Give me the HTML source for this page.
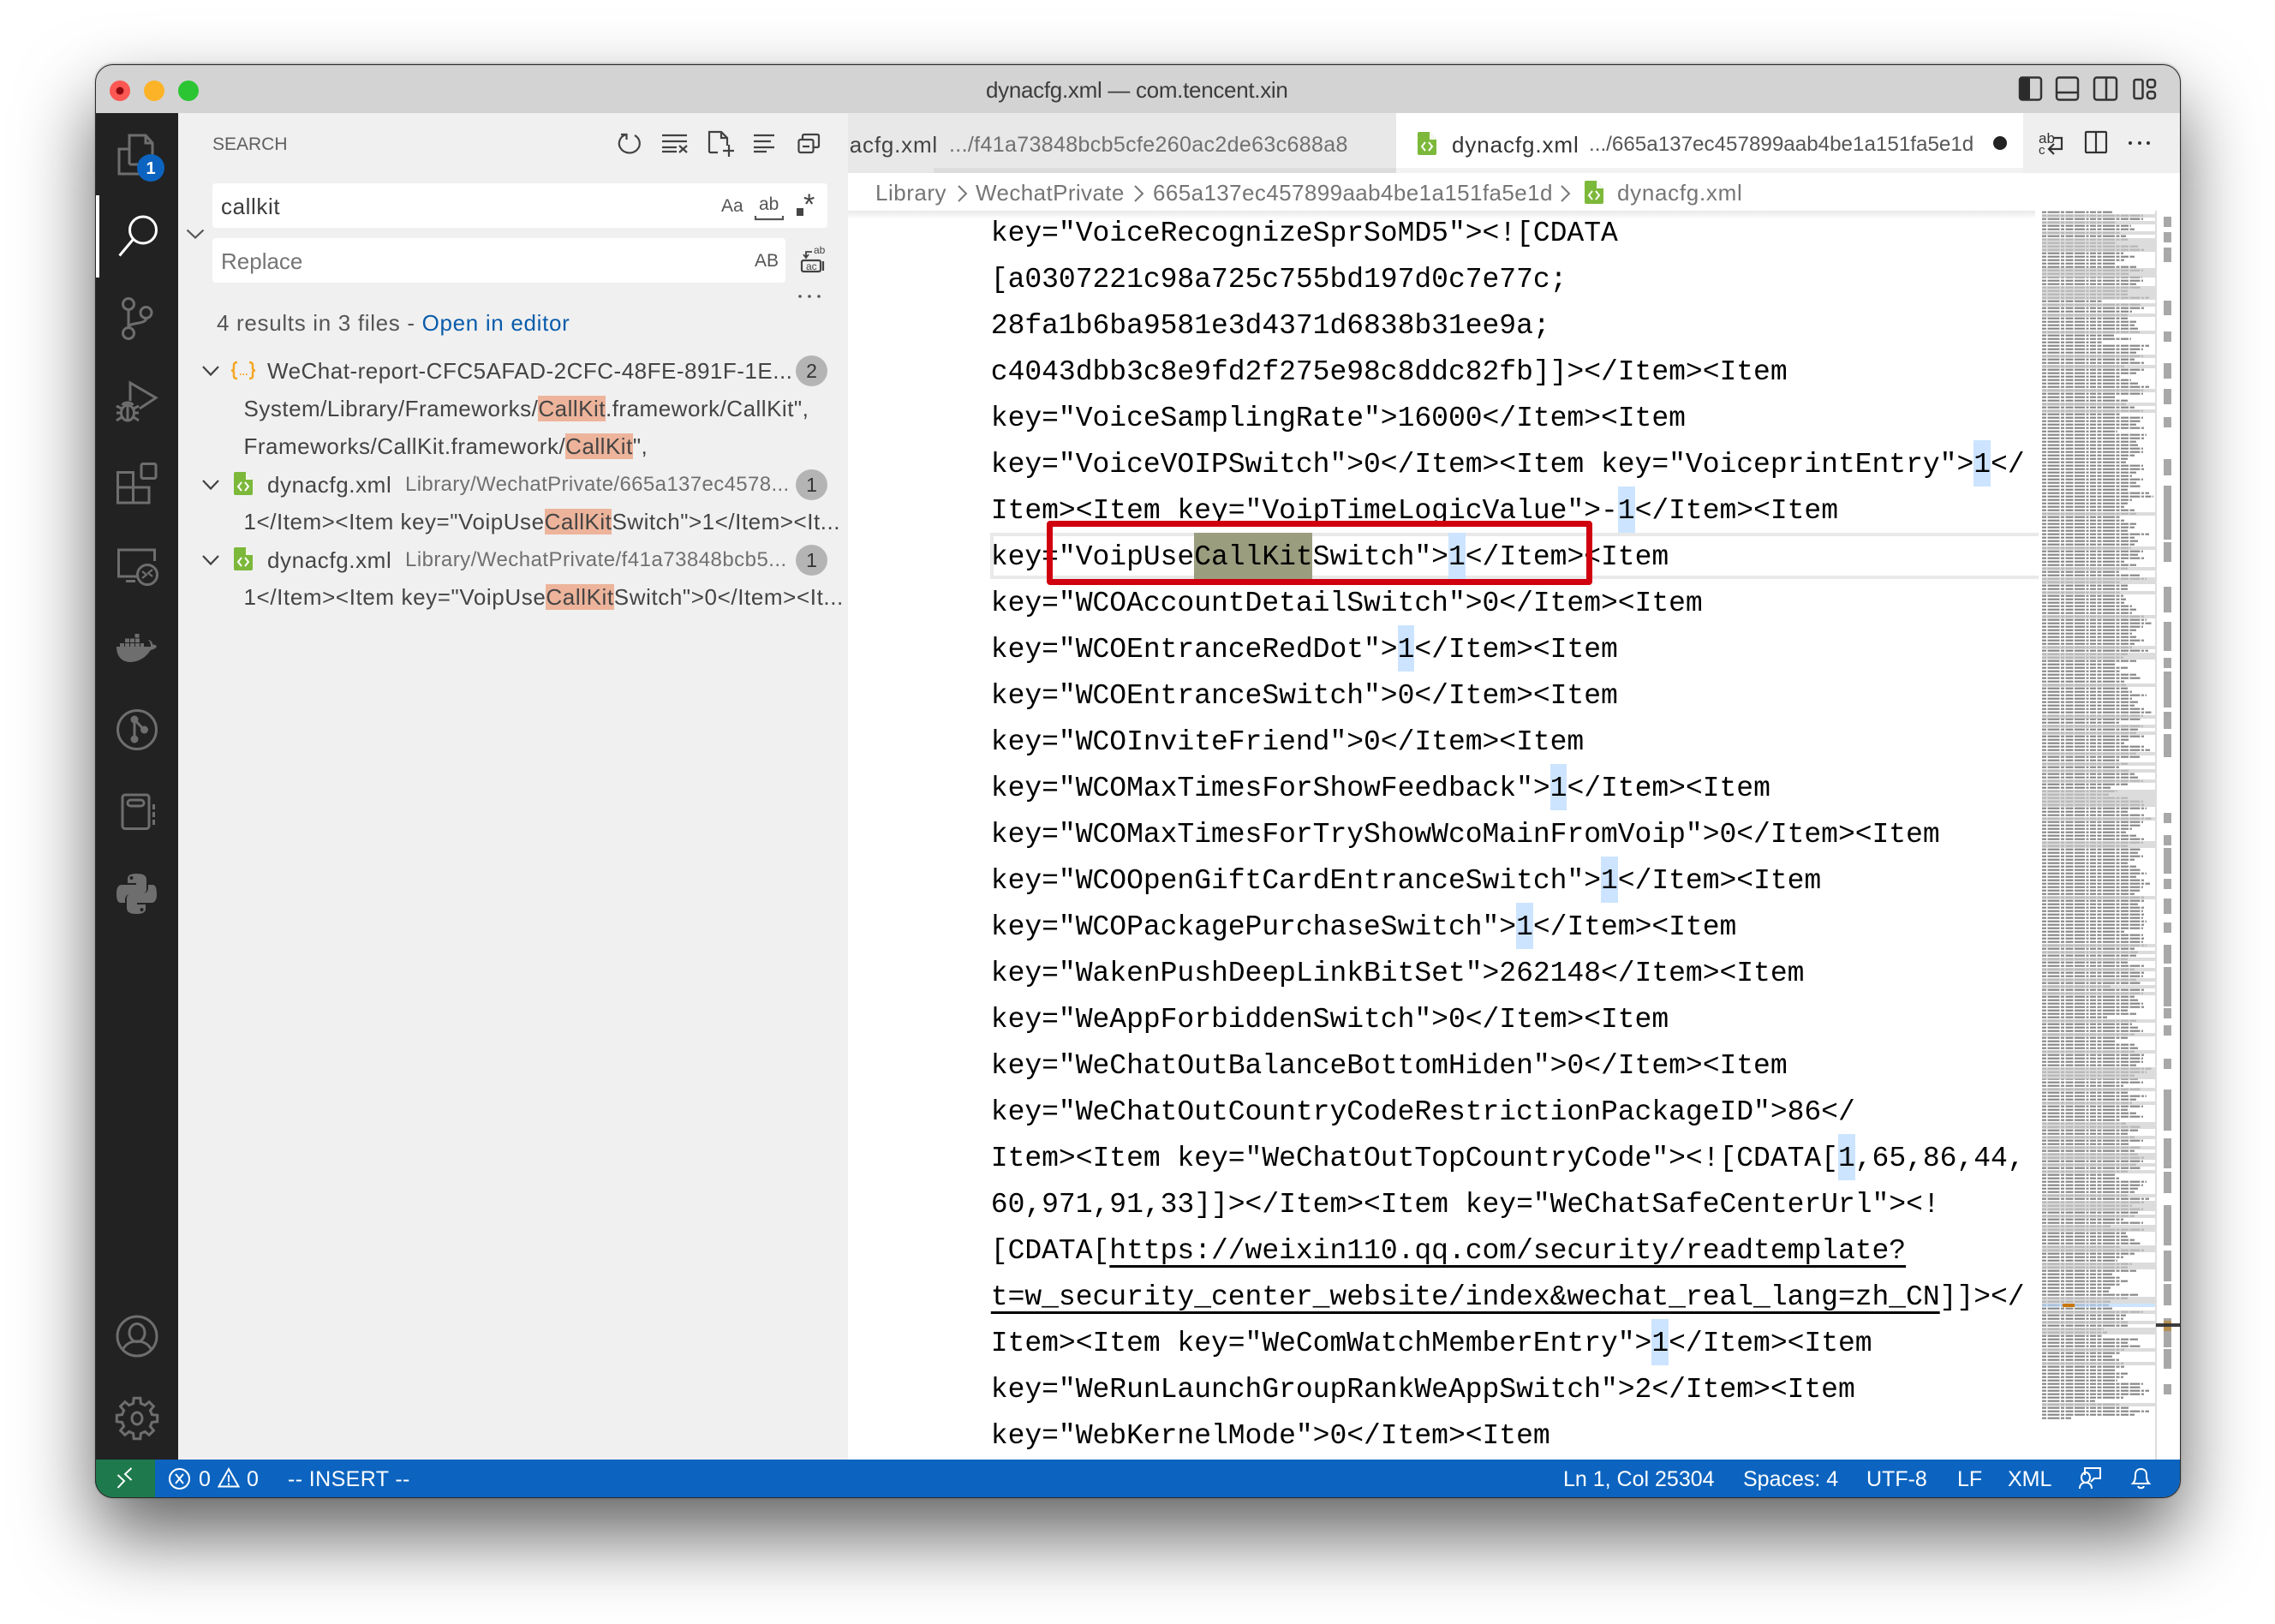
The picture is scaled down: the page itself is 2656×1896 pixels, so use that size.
<!DOCTYPE html>
<html><head><meta charset="utf-8"><style>
html,body{margin:0;padding:0;background:#fff;width:2656px;height:1896px;overflow:hidden}
*{box-sizing:border-box}
#sh{position:absolute;left:112px;top:75px;width:2433px;height:1673px;border-radius:20px;box-shadow:0 44px 90px rgba(0,0,0,.62),0 0 3px rgba(0,0,0,.5)}
#win{position:absolute;left:0;top:0;width:2656px;height:1896px;overflow:hidden;clip-path:inset(75px 111px 148px 111px round 20px);font-family:"Liberation Sans",sans-serif;color:#444}
.b{position:absolute}
.t{position:absolute;white-space:pre;line-height:44px;height:44px;font-size:26px}
.r{letter-spacing:.5px}
.m{position:absolute;left:1156.8px;top:244px;font:33px/57px "Liberation Mono",monospace;color:#000;letter-spacing:-.02px}
.m div{height:54px;white-space:pre}
.h{display:inline-block;background:#cce4ff;height:54px}
u{text-decoration:underline;text-decoration-thickness:3px;text-underline-offset:8px}
mark{background:#edb49b;color:inherit}
.dsc{font-size:24px;color:#707070;letter-spacing:.37px}
.st{color:#fff;font-size:25px}
.c{position:absolute;border-radius:50%;background:#b4b4b4;width:37px;height:36px;left:929px;text-align:center;line-height:36px;font-size:23px;color:#333}
svg{position:absolute;left:0;top:0}
</style></head><body>
<div id="sh"></div>
<div id="win">
<div class="b" style="left:100px;top:70px;width:2460px;height:62px;background:#d3d3d3"></div>
<div class="t" style="left:1151px;top:83px;color:#3c3c3c;letter-spacing:-.3px">dynacfg.xml — com.tencent.xin</div>

<!-- editor -->
<div class="b" style="left:990px;top:132px;width:1560px;height:1572px;background:#fff"></div>
<!-- tabs -->
<div class="b" style="left:990px;top:132px;width:640px;height:70px;background:#e8e8e8"></div>
<div class="b" style="left:1090px;top:196px;width:540px;height:6px;background:#dcdcdc"></div>
<div class="b" style="left:2362px;top:132px;width:190px;height:70px;background:#efefef"></div>
<div class="b" style="left:1630px;top:196px;width:732px;height:6px;background:#f2f2f2"></div>
<div class="t" style="right:1561px;top:147px;letter-spacing:.8px">dynacfg.xml</div>
<div class="t" style="left:1108px;top:147px;font-size:25px;color:#707070;letter-spacing:.35px">.../f41a73848bcb5cfe260ac2de63c688a8</div>
<div class="t" style="left:1695px;top:147px;color:#333;letter-spacing:.9px">dynacfg.xml</div>
<div class="t" style="left:1855px;top:147px;font-size:24.2px;color:#555">.../665a137ec457899aab4be1a151fa5e1d</div>
<!-- breadcrumbs -->
<div class="t" style="left:1022px;top:203px;color:#757575;letter-spacing:.5px">Library</div>
<div class="t" style="left:1139px;top:203px;color:#757575;letter-spacing:.4px">WechatPrivate</div>
<div class="t" style="left:1346px;top:203px;color:#757575;letter-spacing:.4px">665a137ec457899aab4be1a151fa5e1d</div>
<div class="t" style="left:1888px;top:203px;color:#757575;letter-spacing:.7px">dynacfg.xml</div>
<div class="b" style="left:990px;top:246px;width:1386px;height:10px;background:linear-gradient(rgba(0,0,0,.09),rgba(0,0,0,0))"></div>

<!-- code -->
<div class="b" style="left:1156px;top:622px;width:1228px;height:54px;border:4px solid #e9e9e9;border-right:0"></div>
<div class="b" style="left:1394px;top:622px;width:138px;height:54px;background:#9b9d7f"></div>
<div class="m">
<div>key="VoiceRecognizeSprSoMD5"&gt;&lt;![CDATA</div>
<div>[a0307221c98a725c755bd197d0c7e77c;</div>
<div>28fa1b6ba9581e3d4371d6838b31ee9a;</div>
<div>c4043dbb3c8e9fd2f275e98c8ddc82fb]]&gt;&lt;/Item&gt;&lt;Item</div>
<div>key="VoiceSamplingRate"&gt;16000&lt;/Item&gt;&lt;Item</div>
<div>key="VoiceVOIPSwitch"&gt;0&lt;/Item&gt;&lt;Item key="VoiceprintEntry"&gt;<span class="h">1</span>&lt;/</div>
<div>Item&gt;&lt;Item key="VoipTimeLogicValue"&gt;-<span class="h">1</span>&lt;/Item&gt;&lt;Item</div>
<div>key="VoipUseCallKitSwitch"&gt;<span class="h">1</span>&lt;/Item&gt;&lt;Item</div>
<div>key="WCOAccountDetailSwitch"&gt;0&lt;/Item&gt;&lt;Item</div>
<div>key="WCOEntranceRedDot"&gt;<span class="h">1</span>&lt;/Item&gt;&lt;Item</div>
<div>key="WCOEntranceSwitch"&gt;0&lt;/Item&gt;&lt;Item</div>
<div>key="WCOInviteFriend"&gt;0&lt;/Item&gt;&lt;Item</div>
<div>key="WCOMaxTimesForShowFeedback"&gt;<span class="h">1</span>&lt;/Item&gt;&lt;Item</div>
<div>key="WCOMaxTimesForTryShowWcoMainFromVoip"&gt;0&lt;/Item&gt;&lt;Item</div>
<div>key="WCOOpenGiftCardEntranceSwitch"&gt;<span class="h">1</span>&lt;/Item&gt;&lt;Item</div>
<div>key="WCOPackagePurchaseSwitch"&gt;<span class="h">1</span>&lt;/Item&gt;&lt;Item</div>
<div>key="WakenPushDeepLinkBitSet"&gt;262148&lt;/Item&gt;&lt;Item</div>
<div>key="WeAppForbiddenSwitch"&gt;0&lt;/Item&gt;&lt;Item</div>
<div>key="WeChatOutBalanceBottomHiden"&gt;0&lt;/Item&gt;&lt;Item</div>
<div>key="WeChatOutCountryCodeRestrictionPackageID"&gt;86&lt;/</div>
<div>Item&gt;&lt;Item key="WeChatOutTopCountryCode"&gt;&lt;![CDATA[<span class="h">1</span>,65,86,44,</div>
<div>60,971,91,33]]&gt;&lt;/Item&gt;&lt;Item key="WeChatSafeCenterUrl"&gt;&lt;!</div>
<div>[CDATA[<u>https://weixin110.qq.com/security/readtemplate?</u></div>
<div><u>t=w_security_center_website/index&amp;wechat_real_lang=zh_CN</u>]]&gt;&lt;/</div>
<div>Item&gt;&lt;Item key="WeComWatchMemberEntry"&gt;<span class="h">1</span>&lt;/Item&gt;&lt;Item</div>
<div>key="WeRunLaunchGroupRankWeAppSwitch"&gt;2&lt;/Item&gt;&lt;Item</div>
<div>key="WebKernelMode"&gt;0&lt;/Item&gt;&lt;Item</div>
</div>
<div class="b" style="left:2380px;top:246px;width:170px;height:1458px;background:#fff"></div>
<div class="b" style="left:2516px;top:246px;width:1.5px;height:1458px;background:#ddd"></div>

<!-- activity + sidebar -->
<div class="b" style="left:100px;top:132px;width:108px;height:1572px;background:#222"></div>
<div class="b" style="left:112px;top:228px;width:4px;height:96px;background:#fff"></div>
<div class="b" style="left:208px;top:132px;width:782px;height:1572px;background:#f0f0f0"></div>
<div class="t" style="left:248px;top:146.5px;font-size:21px;color:#5f5f5f">SEARCH</div>
<div class="b" style="left:248px;top:214px;width:718px;height:52px;background:#fff;border-radius:4px"></div>
<div class="b" style="left:248px;top:278px;width:669px;height:52px;background:#fff;border-radius:4px"></div>
<div class="t" style="left:258px;top:219px;color:#3c3c3c;letter-spacing:.6px">callkit</div>
<div class="t" style="left:258px;top:283px;color:#757575">Replace</div>
<div class="t" style="left:842px;top:219px;font-size:21px;color:#555">Aa</div>
<div class="t" style="left:886px;top:217px;font-size:21px;color:#555">ab</div>
<div class="t" style="left:938px;top:217px;font-size:34px;color:#444;line-height:44px">*</div>
<div class="t" style="left:881px;top:283px;font-size:21px;color:#555">AB</div>
<div class="t" style="left:253px;top:355px;color:#555;letter-spacing:.68px">4 results in 3 files - <span style="color:#0a5cab">Open in editor</span></div>

<div class="t r" style="left:312px;top:411px">WeChat-report-CFC5AFAD-2CFC-48FE-891F-1E...</div>
<div class="t r" style="left:284.500px;top:455px">System/Library/Frameworks/<mark>CallKit</mark>.framework/CallKit",</div>
<div class="t r" style="left:284.500px;top:499px">Frameworks/CallKit.framework/<mark>CallKit</mark>",</div>
<div class="t" style="left:312px;top:544px;letter-spacing:.6px">dynacfg.xml</div>
<div class="t dsc" style="left:473px;top:544px">Library/WechatPrivate/665a137ec4578...</div>
<div class="t r" style="left:284.500px;top:587px;letter-spacing:.53px">1&lt;/Item&gt;&lt;Item key="VoipUse<mark>CallKit</mark>Switch"&gt;1&lt;/Item&gt;&lt;It...</div>
<div class="t" style="left:312px;top:632px;letter-spacing:.6px">dynacfg.xml</div>
<div class="t dsc" style="left:473px;top:632px;letter-spacing:.47px">Library/WechatPrivate/f41a73848bcb5...</div>
<div class="t r" style="left:284.500px;top:675px;letter-spacing:.6px">1&lt;/Item&gt;&lt;Item key="VoipUse<mark>CallKit</mark>Switch"&gt;0&lt;/Item&gt;&lt;It...</div>
<div class="c" style="top:415px">2</div>
<div class="c" style="top:548px">1</div>
<div class="c" style="top:636px">1</div>

<!-- status -->
<div class="b" style="left:100px;top:1704px;width:2460px;height:46px;background:#0c64c0"></div>
<div class="b" style="left:100px;top:1704px;width:81px;height:46px;background:#1e7a4c"></div>
<div class="t st" style="left:232px;top:1705px">0</div>
<div class="t st" style="left:288px;top:1705px">0</div>
<div class="t st" style="left:336px;top:1705px;letter-spacing:.4px">-- INSERT --</div>
<div class="t st" style="left:1825px;top:1705px">Ln 1, Col 25304</div>
<div class="t st" style="left:2035px;top:1705px">Spaces: 4</div>
<div class="t st" style="left:2179px;top:1705px">UTF-8</div>
<div class="t st" style="left:2285px;top:1705px">LF</div>
<div class="t st" style="left:2344px;top:1705px">XML</div>

<svg width="2656" height="1896" viewBox="0 0 2656 1896" fill="none">
<defs>
<g id="xml"><path d="M2 0H14L22 9V25Q22 27 20 27H2Q0 27 0 25V2Q0 0 2 0Z" fill="#7cb83a"/><path d="M14 0V9H22Z" fill="#f4f9ee"/><path d="M9 12L5 17L9 22M13 12L17 17L13 22" stroke="#fff" stroke-width="2"/></g>
</defs>
<!-- traffic -->
<circle cx="140" cy="106" r="12" fill="#fc5753"/><circle cx="140" cy="106" r="4.5" fill="#8c0a10"/>
<circle cx="180" cy="106" r="12" fill="#fdb327"/><circle cx="220" cy="106" r="12" fill="#2bc534"/>
<!-- layout icons -->
<g stroke="#333" stroke-width="2.5">
<rect x="2358" y="90.5" width="25" height="26" rx="3"/><rect x="2358" y="90.5" width="12" height="26" rx="2" fill="#2b2b2b" stroke="none"/>
<rect x="2401" y="90.5" width="25" height="26" rx="3"/><path d="M2401 108H2426"/>
<rect x="2445" y="90.5" width="26" height="26" rx="3"/><path d="M2459 90.5V116"/>
<rect x="2491.5" y="93" width="10" height="22" rx="2"/><rect x="2507" y="93" width="9" height="9" rx="3"/><rect x="2507" y="107" width="9" height="8" rx="3"/>
</g>
<!-- activity icons -->
<g stroke="#6e6e6e" stroke-width="3" stroke-linejoin="miter">
<path d="M151 192V158H170L178 167V192H151M170 158V167H178M151 174H139V203H170V192"/>
<circle cx="150" cy="355" r="6.5"/><circle cx="150" cy="389" r="6.5"/><circle cx="170.5" cy="365" r="6.5"/>
<path d="M150 362V382M170.5 372C170.5 379 150 376 150 382"/>
<path d="M152 468V447L182 464.5L163 477"/>
<ellipse cx="149" cy="482" rx="7.5" ry="9"/><path d="M143 473C144 469 154 469 155 473M136 474L142 477M162 474L156 477M136 482H141M162 482H157M136 491L142 487M162 491L156 487M149 474V491"/>
<path d="M137.5 551.5H155.5V569H174V587H137.5ZM155.5 569V587M137.5 569H155.5"/><rect x="165" y="541.5" width="17" height="17" rx="2"/>
<path d="M180.5 655V642H138.5V673H160M147 678.5H158"/><circle cx="172" cy="671" r="11.5"/>
<path d="M166 667L171 671L166 675M178 665L173 669L178 673" stroke-width="2.2"/>
<circle cx="160" cy="852" r="22.5"/><path d="M157 840V863M157 840L168 852" />
<rect x="143" y="928" width="31" height="39.5" rx="3"/><rect x="149" y="934" width="19" height="7" rx="3.5"/>
<circle cx="160" cy="1560" r="23"/><ellipse cx="160" cy="1556" rx="9" ry="10.5"/><path d="M143 1576C147 1569 152 1566 160 1566C168 1566 173 1569 177 1576"/>
<path d="M155.6 1638.5L156.2 1632.3H163.8L164.4 1638.5L169.3 1640.6L174.1 1636.6L179.4 1641.9L175.4 1646.7L177.5 1651.6L183.7 1652.2V1659.8L177.5 1660.4L175.4 1665.3L179.4 1670.1L174.1 1675.4L169.3 1671.4L164.4 1673.5L163.8 1679.7H156.2L155.6 1673.5L150.7 1671.4L145.9 1675.4L140.6 1670.1L144.6 1665.3L142.5 1660.4L136.3 1659.8V1652.2L142.5 1651.6L144.6 1646.7L140.6 1641.9L145.9 1636.6L150.7 1640.6Z"/><ellipse cx="160" cy="1656" rx="6" ry="7"/>
</g>
<g fill="#6e6e6e">
<path d="M136 755H176C176 751 175 749 173 747C176 747 178 750 178.500 753C180 752 182 753 183 755C180 759 176 758 175 760C170 768 161 773 152 773C143 773 136 767 136 755Z"/>
<rect x="140" y="751" width="5" height="4"/><rect x="146" y="751" width="5" height="4"/><rect x="152" y="751" width="5" height="4"/><rect x="158" y="751" width="5" height="4"/><rect x="164" y="751" width="4" height="4"/>
<rect x="146" y="745.500" width="5" height="4.500"/><rect x="152" y="745.500" width="5" height="4.500"/><rect x="158" y="745.500" width="5" height="4.500"/><rect x="157.500" y="740" width="5" height="4.500"/>
<circle cx="157" cy="840" r="4.500"/><circle cx="168.500" cy="852" r="4.500"/><circle cx="157" cy="863" r="4.500"/>
<rect x="178" y="939" width="3" height="6"/><rect x="178" y="948" width="3" height="6"/><rect x="178" y="957" width="3" height="6"/>
<path d="M149 1026C149 1021 154 1020 160 1020C167 1020 171 1022 171 1027V1038C171 1042 168 1044 164 1044H152C148 1044 146 1047 146 1051V1054H141C137 1054 136 1049 136 1043C136 1037 138 1033 142 1033H159V1031H149Z"/>
<path d="M149 1026C149 1021 154 1020 160 1020C167 1020 171 1022 171 1027V1038C171 1042 168 1044 164 1044H152C148 1044 146 1047 146 1051V1054H141C137 1054 136 1049 136 1043C136 1037 138 1033 142 1033H159V1031H149Z" transform="rotate(180 159.5 1043.5)"/>
</g>
<circle cx="153.500" cy="1025" r="2" fill="#222"/><circle cx="165.500" cy="1062" r="2" fill="#222"/>
<!-- search icon -->
<circle cx="167" cy="268.500" r="15.500" stroke="#fff" stroke-width="3"/><path d="M155 280L139.500 298.500" stroke="#fff" stroke-width="3"/>
<!-- files badge -->
<circle cx="176" cy="196" r="16" fill="#0c64c0"/>
<text x="176" y="203" font-family="Liberation Sans" font-weight="700" font-size="20" fill="#fff" text-anchor="middle">1</text>
<!-- toolbar -->
<g stroke="#424242" stroke-width="2.200">
<path d="M741 158A12 11 0 1 1 731 157M725 157H731.500V163"/>
<path d="M773 158H802M773 165H802M773 172H790M773 177H790M793 170L802 178M802 170L793 178"/>
<path d="M828 178V154H842L849 161V170M842 154V161H849M828 178H838M851 169V183M844 176H857"/>
<path d="M880 158H904M880 165H900M880 172H904M880 177H895"/>
<rect x="932.500" y="163" width="17" height="15" rx="2"/><path d="M937 163V159Q937 157 939 157H954Q956 157 956 159V170Q956 172 954 172H950M937 171H945"/>
<path d="M218.500 268.500L228 277.500L237.500 268.500" stroke="#555"/>
<path d="M882 252V256H914V252" stroke="#555"/>
<rect x="936" y="304" width="22" height="13" rx="2"/><path d="M961 305V316"/>
<path d="M948 294H941V300M938 297L941 301L944 297" stroke-width="1.800"/>
</g>
<rect x="930" y="243" width="8" height="9" fill="#444"/>
<text x="950" y="296" font-family="Liberation Sans" font-size="12" fill="#444">ab</text>
<text x="941" y="315" font-family="Liberation Sans" font-size="12" fill="#444">ac</text>
<circle cx="934" cy="346" r="1.800" fill="#555"/><circle cx="945" cy="346" r="1.800" fill="#555"/><circle cx="956" cy="346" r="1.800" fill="#555"/>
<!-- tree -->
<g stroke="#424242" stroke-width="2.200">
<path d="M237 428L246 437.500L255 428M237 561L246 570.500L255 561M237 649L246 658.500L255 649"/>
</g>
<g transform="translate(270 422)" stroke="#f5a623" stroke-width="2.500">
<path d="M7 1Q3 1 3 4V8Q3 10.500 0 10.500Q3 10.500 3 13V17Q3 20 7 20M21 1Q25 1 25 4V8Q25 10.500 28 10.500Q25 10.500 25 13V17Q25 20 21 20"/>
<path d="M10 15H11.500M13.500 15H15M17 15H18.500" stroke-width="2"/>
</g>
<use href="#xml" x="273" y="551"/><use href="#xml" x="273" y="639"/><use href="#xml" x="1655" y="154"/><use href="#xml" x="1850" y="211"/>
<!-- tab actions -->
<circle cx="2335" cy="167" r="8" fill="#222"/>
<text x="2380" y="167" font-family="Liberation Sans" font-size="17" fill="#333">ab</text><text x="2380" y="180" font-family="Liberation Sans" font-size="15" fill="#333">c</text>
<path d="M2398 161H2407V174H2393M2398 168L2392 174L2398 180" stroke="#333" stroke-width="2.200"/>
<rect x="2435" y="154" width="24" height="24" rx="1" stroke="#333" stroke-width="2.200"/><path d="M2447 154V178" stroke="#333" stroke-width="2.200"/>
<circle cx="2487" cy="167" r="2" fill="#333"/><circle cx="2498" cy="167" r="2" fill="#333"/><circle cx="2508" cy="167" r="2" fill="#333"/>
<!-- breadcrumb chevrons -->
<path d="M1119 217L1128 226L1119 235M1325 217L1334 226L1325 235M1823 217L1832 226L1823 235" stroke="#777" stroke-width="2"/>
<!-- status icons -->
<g stroke="#fff" stroke-width="2">
<path d="M137.500 1722L145 1729L137.500 1737M153.500 1714L146 1721L153.500 1728"/>
<circle cx="209.500" cy="1726.500" r="11.500"/><path d="M205 1721L214 1732M214 1721L205 1732"/>
<path d="M267 1715L278.500 1735.500H255.500Z"/><path d="M267 1722V1730M267 1731.500V1734"/>
<path d="M2435 1721H2434V1714H2452V1726H2445L2441 1730"/><ellipse cx="2435" cy="1725" rx="5" ry="6"/><path d="M2428 1738C2428 1733 2431 1731 2435 1731C2439 1731 2442 1733 2442 1738"/>
<path d="M2490 1732C2493 1729 2493 1725 2493 1722C2493 1717 2496 1715 2499.500 1715C2503 1715 2506 1717 2506 1722C2506 1725 2506 1729 2509 1732H2490ZM2496 1735C2497 1738 2502 1738 2503 1735"/>
</g>
<!-- minimap -->
<path fill="#dcdcdc" transform="translate(2384 0)" d="M0 250h132v4H0zM0 258h132v4H0zM0 270h132v4H0zM0 278h132v16H0zM0 313h132v11H0zM0 334h132v16H0zM0 354h132v4H0zM0 366h132v4H0zM0 386h132v4H0zM0 414h132v4H0zM0 426h132v4H0zM0 454h132v4H0zM0 470h132v4H0zM0 478h132v4H0zM0 598h132v4H0zM0 638h132v4H0zM0 662h132v4H0zM0 674h132v8H0zM0 690h132v4H0zM0 718h132v4H0zM0 754h132v4H0zM0 762h132v8H0zM0 798h132v4H0zM0 835h132v4H0zM0 846h132v4H0zM0 854h132v4H0zM0 878h132v4H0zM0 890h132v4H0zM0 898h132v4H0zM0 910h132v4H0zM0 922h132v20H0zM0 954h132v4H0zM0 982h132v8H0zM0 1046h132v4H0zM0 1102h132v4H0zM0 1110h132v4H0zM0 1118h132v4H0zM0 1130h132v4H0zM0 1142h132v4H0zM0 1150h132v4H0zM0 1158h132v4H0zM0 1190h132v4H0zM0 1206h132v4H0zM0 1226h132v4H0zM0 1246h132v14H0zM0 1270h132v4H0zM0 1286h132v4H0zM0 1310h132v8H0zM0 1326h132v4H0zM0 1338h132v4H0zM0 1346h132v8H0zM0 1358h132v4H0zM0 1366h132v4H0zM0 1394h132v4H0zM0 1402h132v12H0zM0 1418h132v4H0zM0 1430h132v8H0zM0 1454h132v8H0zM0 1474h132v8H0zM0 1514h132v8H0zM0 1530h132v4H0zM0 1542h132v4H0zM0 1550h132v8H0zM0 1574h132v4H0zM0 1590h132v4H0zM0 1638h132v4H0z"/>
<rect x="2384" y="1522" width="132" height="4" fill="#cce4ff"/>
<path transform="translate(2384 245.700)" stroke="#3a3a3a" stroke-opacity=".62" stroke-width="2.100" stroke-dasharray="5 1.500 14 1.500 4 1.500 9 1.500 12 1.500 3 1.500 7 1.500" d="M0 2H82M0 6H118M0 10H118M0 14H87M0 18H104M0 22H108M0 26H91M0 30H98M0 34H100M0 38H87M0 42H112M0 46H120M0 50H95M0 54H108M0 58H96M0 62H85M0 66H110M0 70H118M0 74H102M0 78H117M0 82H118M0 86H110M0 90H115M0 94H100M0 98H100M0 102H125M0 106H70M0 110H115M0 114H120M0 118H105M0 122H100M0 126H100M0 130H110M0 134H108M0 138H112M0 142H114M0 146H84M0 150H104M0 154H70M0 158H125M0 162H118M0 166H110M0 170H118M0 174H108M0 178H120M0 182H96M0 186H120M0 190H110M0 194H92M0 198H104M0 202H112M0 206H125M0 210H118M0 214H118M0 218H85M0 222H100M0 226H98M0 230H108M0 234H118M0 238H92M0 242H118M0 246H115M0 250H110M0 254H120M0 258H88M0 262H122M0 266H120M0 270H110M0 274H112M0 278H118M0 282H118M0 286H108M0 290H100M0 294H98M0 298H118M0 302H120M0 306H110M0 310H105M0 314H118M0 318H110M0 322H115M0 326H100M0 330H125M0 334H130M0 338H105M0 342H100M0 346H96M0 350H108M0 354H110M0 358H92M0 362H96M0 366H110M0 370H108M0 374H100M0 378H125M0 382H108M0 386H112M0 390H108M0 394H104M0 398H118M0 402H112M0 406H120M0 410H96M0 414H110M0 418H100M0 422H90M0 426H114M0 430H122M0 434H92M0 438H100M0 442H100M0 446H92M0 450H95M0 454H98M0 458H96M0 462H105M0 466H110M0 470H105M0 474H120M0 478H122M0 482H128M0 486H118M0 490H110M0 494H105M0 498H110M0 502H120M0 506H108M0 510H105M0 514H124M0 518H100M0 522H95M0 526H110M0 530H85M0 534H100M0 538H92M0 542H110M0 546H115M0 550H96M0 554H98M0 558H100M0 562H105M0 566H122M0 570H105M0 574H112M0 578H108M0 582H120M0 586H128M0 590H118M0 594H116M0 598H90M0 602H118M0 606H112M0 610H110M0 614H120M0 618H102M0 622H96M0 626H120M0 630H126M0 634H110M0 638H114M0 642H90M0 646H100M0 650H90M0 654H102M0 658H108M0 662H112M0 666H118M0 670H100M0 674H80M0 678H88M0 682H78M0 686H100M0 690H118M0 694H120M0 698H122M0 702H100M0 706H120M0 710H128M0 714H118M0 718H116M0 722H105M0 726H98M0 730H110M0 734H120M0 738H118M0 742H100M0 746H115M0 750H112M0 754H118M0 758H108M0 762H100M0 766H110M0 770H115M0 774H122M0 778H110M0 782H120M0 786H126M0 790H118M0 794H114M0 798H108M0 802H120M0 806H120M0 810H112M0 814H120M0 818H118M0 822H120M0 826H118M0 830H122M0 834H120M0 838H118M0 842H96M0 846H118M0 850H120M0 854H118M0 858H122M0 862H108M0 866H112M0 870H110M0 874H100M0 878H100M0 882H120M0 886H108M0 890H120M0 894H118M0 898H110M0 902H115M0 906H80M0 910H120M0 914H118M0 918H108M0 922H112M0 926H118M0 930H120M0 934H100M0 938H110M0 942H76M0 946H110M0 950H105M0 954H112M0 958H118M0 962H108M0 966H100M0 970H85M0 974H108M0 978H112M0 982H108M0 986H120M0 990H118M0 994H118M0 998H110M0 1002H128M0 1006H122M0 1010H108M0 1014H112M0 1018H118M0 1022H95M0 1026H115M0 1030H100M0 1034H122M0 1038H110M0 1042H105M0 1046H118M0 1050H100M0 1054H110M0 1058H118M0 1062H92M0 1066H98M0 1070H115M0 1074H112M0 1078H100M0 1082H108M0 1086H118M0 1090H102M0 1094H115M0 1098H108M0 1102H112M0 1106H120M0 1110H118M0 1114H110M0 1118H115M0 1122H100M0 1126H85M0 1130H90M0 1134H122M0 1138H118M0 1142H112M0 1146H108M0 1150H100M0 1154H125M0 1158H120M0 1162H105M0 1166H118M0 1170H112M0 1174H108M0 1178H95M0 1182H118M0 1186H80M0 1190H120M0 1194H98M0 1198H100M0 1202H108M0 1206H115M0 1210H92M0 1214H120M0 1218H108M0 1222H95M0 1226H88M0 1230H105M0 1234H100M0 1238H110M0 1242H82M0 1246H92M0 1250H100M0 1254H92M0 1258H80M0 1262H78M0 1266H112M0 1270H100M0 1274H80M0 1278H78M0 1282H82M0 1286H118M0 1290H98M0 1294H95M0 1298H100M0 1302H100M0 1306H72M0 1310H76M0 1314H70M0 1318H112M0 1322H100M0 1326H115M0 1330H96M0 1334H92M0 1338H82M0 1342H90M0 1346H95M0 1350H96M0 1354H86M0 1358H100M0 1362H95M0 1366H88M0 1370H118M0 1374H115M0 1378H125M0 1382H120M0 1386H95M0 1390H62M0 1394H90M0 1398H102M0 1402H125M0 1406H108M0 1410H34"/>
<path fill="#dcdcdc" fill-opacity=".62" transform="translate(2384 0)" d="M0 250h132v4H0zM0 258h132v4H0zM0 270h132v4H0zM0 278h132v16H0zM0 313h132v11H0zM0 334h132v16H0zM0 354h132v4H0zM0 366h132v4H0zM0 386h132v4H0zM0 414h132v4H0zM0 426h132v4H0zM0 454h132v4H0zM0 470h132v4H0zM0 478h132v4H0zM0 598h132v4H0zM0 638h132v4H0zM0 662h132v4H0zM0 674h132v8H0zM0 690h132v4H0zM0 718h132v4H0zM0 754h132v4H0zM0 762h132v8H0zM0 798h132v4H0zM0 835h132v4H0zM0 846h132v4H0zM0 854h132v4H0zM0 878h132v4H0zM0 890h132v4H0zM0 898h132v4H0zM0 910h132v4H0zM0 922h132v20H0zM0 954h132v4H0zM0 982h132v8H0zM0 1046h132v4H0zM0 1102h132v4H0zM0 1110h132v4H0zM0 1118h132v4H0zM0 1130h132v4H0zM0 1142h132v4H0zM0 1150h132v4H0zM0 1158h132v4H0zM0 1190h132v4H0zM0 1206h132v4H0zM0 1226h132v4H0zM0 1246h132v14H0zM0 1270h132v4H0zM0 1286h132v4H0zM0 1310h132v8H0zM0 1326h132v4H0zM0 1338h132v4H0zM0 1346h132v8H0zM0 1358h132v4H0zM0 1366h132v4H0zM0 1394h132v4H0zM0 1402h132v12H0zM0 1418h132v4H0zM0 1430h132v8H0zM0 1454h132v8H0zM0 1474h132v8H0zM0 1514h132v8H0zM0 1530h132v4H0zM0 1542h132v4H0zM0 1550h132v8H0zM0 1574h132v4H0zM0 1590h132v4H0zM0 1638h132v4H0z"/>
<rect x="2384" y="1522" width="132" height="4" fill="#cce4ff" fill-opacity=".6"/>
<rect x="2408" y="1522" width="14" height="4" fill="#c9760e"/>
<!-- overview ruler -->
<path fill="#a8a8a8" d="M2526 253h9v12h-9zM2526 271h9v12h-9zM2526 289h9v17h-9zM2526 351h9v17h-9zM2526 387h9v12h-9zM2526 424h9v18h-9zM2526 454h9v18h-9zM2526 487h9v12h-9zM2526 536h9v19h-9zM2526 567h9v63h-9zM2526 633h9v23h-9zM2526 685h9v30h-9zM2526 726h9v34h-9zM2526 768h9v12h-9zM2526 784h9v42h-9zM2526 831h9v20h-9zM2526 857h9v27h-9zM2526 949h9v12h-9zM2526 975h9v12h-9zM2526 990h9v30h-9zM2526 1026h9v12h-9zM2526 1049h9v18h-9zM2526 1077h9v12h-9zM2526 1103h9v22h-9zM2526 1129h9v46h-9zM2526 1177h9v12h-9zM2526 1197h9v12h-9zM2526 1236h9v12h-9zM2526 1272h9v48h-9zM2526 1329h9v35h-9zM2526 1368h9v25h-9zM2526 1407h9v47h-9zM2526 1460h9v36h-9zM2526 1499h9v25h-9zM2526 1539h9v34h-9zM2526 1575h9v23h-9zM2526 1616h9v12h-9z"/>
<rect x="2526" y="1542" width="9" height="12" fill="#b89050"/>
<rect x="2517" y="1545" width="28" height="4" fill="#333" fill-opacity=".95"/>
</svg>
<!-- red annotation -->
<div class="b" style="left:1222px;top:608px;width:637px;height:75px;border:7.500px solid #d0000f;border-radius:4px"></div>
</div>
<div class="b" style="left:111px;top:74.500px;width:2435px;height:1674px;border:1.500px solid #2a2a2a;border-radius:21px"></div>
</body></html>
